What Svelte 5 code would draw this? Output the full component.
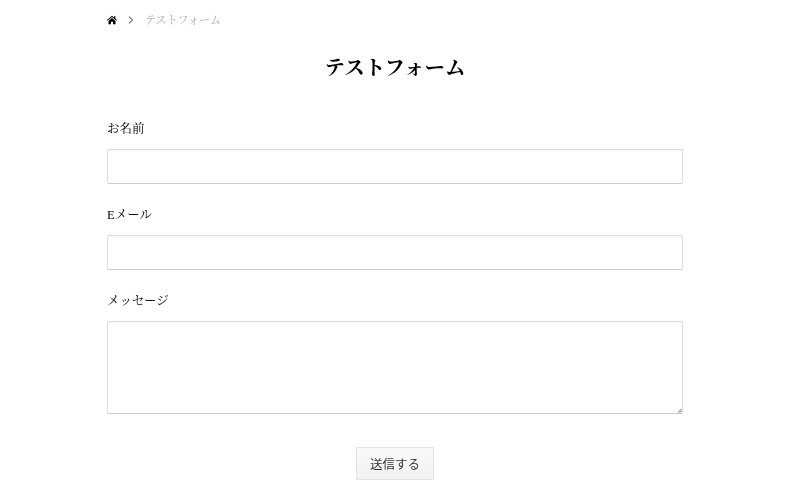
<script>
  const fields = [
    { label: 'お名前', type: 'text' },
    { label: 'Eメール', type: 'email' }
  ];
</script>

<div class="page">
  <nav class="crumbs">
    <svg class="home" viewBox="0 0 12 12" width="10" height="10" aria-hidden="true">
      <path d="M6 .8 0 6.1l.8.9L6 2.5 11.2 7l.8-.9-2-1.8V1.4H8.4v1.5Z" fill="#000" />
      <path d="M1.8 7.2 6 3.6l4.2 3.6V11.2H7.3V8H4.7v3.2H1.8Z" fill="#000" />
    </svg>
    <svg class="chev" viewBox="0 0 6 8" width="6" height="8" aria-hidden="true">
      <path d="M1 .7 4.6 4 1 7.3" fill="none" stroke="#333" stroke-width="1" />
    </svg>
    <span class="current">テストフォーム</span>
  </nav>

  <h1>テストフォーム</h1>

  <form on:submit|preventDefault>
    {#each fields as f}
      <div class="field">
        <label for={f.type}>{f.label}</label>
        <input id={f.type} type={f.type} />
      </div>
    {/each}
    <div class="field">
      <label for="msg">メッセージ</label>
      <div class="area">
        <textarea id="msg"></textarea>
        <svg class="grip" viewBox="0 0 5 5" width="5" height="5" aria-hidden="true">
          <path d="M1 4.5 4.5 1M3 4.5 4.5 3" fill="none" stroke="#666" stroke-width="1" />
        </svg>
      </div>
    </div>
    <div class="actions">
      <button type="submit">送信する</button>
    </div>
  </form>
</div>

<style>
  :global(body) {
    margin: 0;
    background: #fff;
    color: #000;
    font-family: "Liberation Serif", "Noto Serif CJK JP", serif;
  }
  .page {
    width: 576px;
    margin: 0 auto;
    will-change: transform;
  }
  .crumbs {
    display: flex;
    align-items: center;
    height: 39px;
    font-size: 11px;
  }
  .home { margin-right: 11px; }
  .chev { margin-right: 11px; }
  .current { color: #aaa; letter-spacing: 0.05px; position: relative; top: -1px; }
  h1 {
    margin: 15px 0 0;
    height: 28px;
    line-height: 28px;
    font-size: 20.5px;
    font-weight: 700;
    text-align: center;
  }
  form { margin-top: 36px; display: block; }
  .field { margin-bottom: 20px; }
  label {
    display: block;
    height: 21px;
    line-height: 23px;
    margin-bottom: 10px;
    font-size: 12.5px;
    color: #000;
  }
  input, textarea {
    display: block;
    box-sizing: border-box;
    width: 100%;
    margin: 0;
    border: 1px solid #ddd;
    border-bottom-color: #ccc;
    border-radius: 2px;
    background: #fff;
    box-shadow: inset 0 1px 1px rgba(0, 0, 0, 0.04);
    padding: 0 10px;
  }
  input { height: 35px; }
  textarea { height: 93px; resize: none; }
  .area { position: relative; }
  .grip { position: absolute; right: 1px; bottom: 1px; }
  .actions {
    display: flex;
    justify-content: center;
    margin-top: 33px;
  }
  button {
    box-sizing: border-box;
    width: 78px;
    height: 33px;
    border: 1px solid #e3e3e3;
    background: linear-gradient(#fafafa, #f2f2f2);
    color: #333;
    font-family: "Noto Sans CJK JP", sans-serif;
    font-size: 12.5px;
    padding: 0;
  }
</style>
